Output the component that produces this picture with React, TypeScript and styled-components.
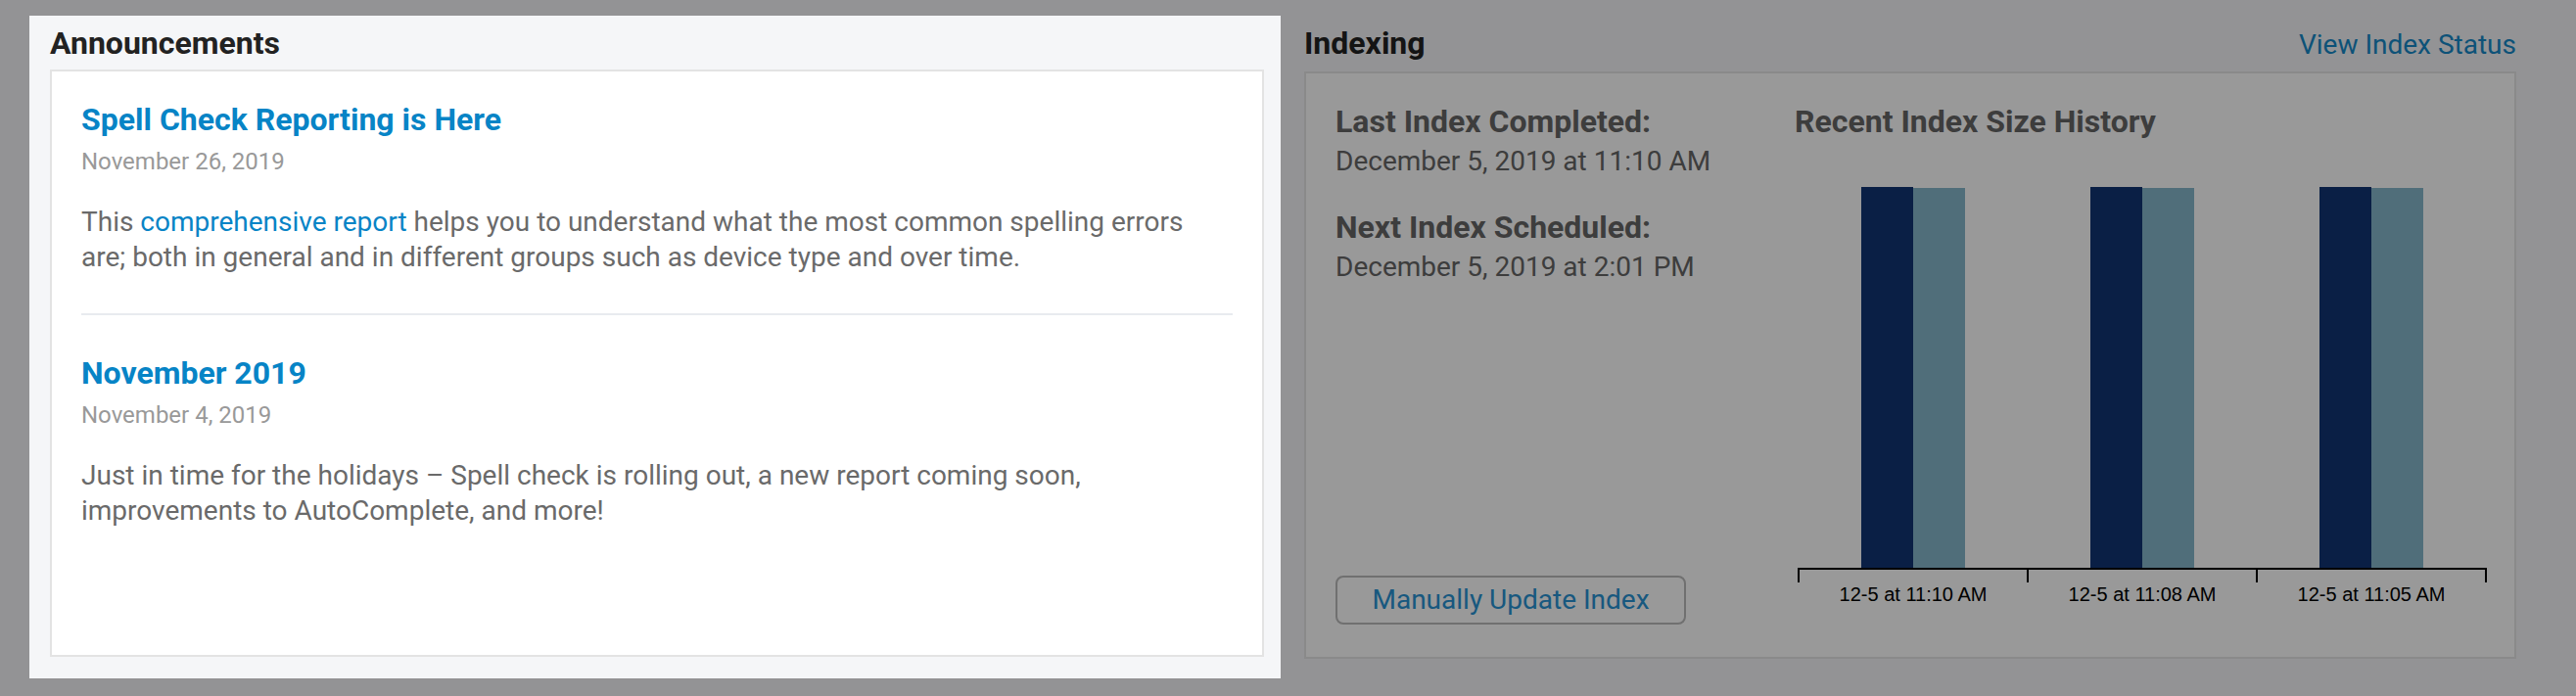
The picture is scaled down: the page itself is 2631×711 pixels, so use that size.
import React from "react";
import styled, { createGlobalStyle } from "styled-components";

const Global = createGlobalStyle`
  html, body {
    margin: 0;
    padding: 0;
    background: #f5f6f8;
    font-family: Roboto, "Liberation Sans", Arial, sans-serif;
    overflow: hidden;
  }
  #root { min-height: 100vh; }
`;

const Page = styled.div`
  display: grid;
  grid-template-columns: 1278px 1238px;
  column-gap: 24px;
  padding: 16px 0 0 30px;
  min-height: 100vh;
  box-sizing: border-box;
`;

const Spotlight = styled.section`
  position: relative;
  z-index: 1;
  background: #f5f6f8;
  padding: 9px 17px 22px 21px;
  box-shadow: 0 0 0 4000px rgba(0, 0, 0, 0.4);
  align-self: start;
`;

const Column = styled.section`
  padding-top: 9px;
  align-self: start;
`;

const Header = styled.div`
  display: flex;
  justify-content: space-between;
  align-items: baseline;
  margin-bottom: 8px;
`;

const SectionTitle = styled.h2`
  margin: 0;
  font-size: 32px;
  line-height: 38px;
  font-weight: 700;
  color: #222;
`;

const HeaderLink = styled.a`
  font-size: 28px;
  line-height: 38px;
  color: #1789c8;
  text-decoration: none;
`;

const Card = styled.div<{ $border: string }>`
  box-sizing: border-box;
  height: 600px;
  background: #fff;
  border: 2px solid ${(p) => p.$border};
  padding: 29px 30px 33px 30px;
`;

const ItemTitle = styled.a`
  display: block;
  font-size: 32px;
  line-height: 40px;
  font-weight: 700;
  color: #0784c6;
  text-decoration: none;
`;

const ItemDate = styled.div`
  margin-top: 8px;
  font-size: 24px;
  line-height: 30px;
  color: #999;
`;

const ItemBody = styled.p`
  margin: 29px 0 0;
  font-size: 28px;
  line-height: 36px;
  color: #6a6a6a;
`;

const InlineLink = styled.a`
  color: #0784c6;
  text-decoration: none;
`;

const Divider = styled.hr`
  border: 0;
  height: 2px;
  background: #e8ebef;
  margin: 39px 0 39px;
`;

const IndexGrid = styled.div`
  display: grid;
  grid-template-columns: 469px 1fr;
  height: 100%;
`;

const InfoColumn = styled.div`
  display: flex;
  flex-direction: column;
  align-items: flex-start;
`;

const Label = styled.div<{ $gap?: boolean }>`
  font-size: 32px;
  line-height: 40px;
  font-weight: 700;
  color: #666;
  margin-top: ${(p) => (p.$gap ? "29px" : "0")};
`;

const Value = styled.div`
  margin-top: 3px;
  font-size: 28px;
  line-height: 36px;
  color: #666;
`;

const Button = styled.button`
  margin-top: auto;
  width: 358px;
  height: 50px;
  box-sizing: border-box;
  border: 2px solid #bbb;
  border-radius: 8px;
  background: #fff;
  color: #2893d4;
  font-family: Roboto, "Liberation Sans", Arial, sans-serif;
  font-size: 28px;
  line-height: 1;
  padding: 0;
  cursor: pointer;
`;

const ChartColumn = styled.div`
  display: flex;
  flex-direction: column;
`;

const ChartSvg = styled.svg`
  display: block;
  margin-top: 18px;
  overflow: visible;
`;

const bars = [
  { x: 68, label: "12-5 at 11:10 AM" },
  { x: 302, label: "12-5 at 11:08 AM" },
  { x: 536, label: "12-5 at 11:05 AM" },
];

function SizeChart() {
  return (
    <ChartSvg width={705} height={470} viewBox="0 0 705 470">
      {bars.map((b) => (
        <g key={b.label}>
          <rect x={b.x} y={29} width={53} height={389} fill="#123473" />
          <rect x={b.x + 53} y={30} width={53} height={388} fill="#85b7cb" />
          <text
            x={b.x + 53}
            y={452}
            textAnchor="middle"
            fontFamily='"Liberation Sans", Arial, sans-serif'
            fontSize={20}
            fill="#000"
          >
            {b.label}
          </text>
        </g>
      ))}
      <path d="M4,433V419H706V433" fill="none" stroke="#000" strokeWidth={2} />
      <path d="M238,419V433M472,419V433" fill="none" stroke="#000" strokeWidth={2} />
    </ChartSvg>
  );
}

export default function App() {
  return (
    <>
      <Global />
      <Page>
        <Spotlight>
          <Header>
            <SectionTitle>Announcements</SectionTitle>
          </Header>
          <Card $border="#e3e3e3">
            <ItemTitle href="#">Spell Check Reporting is Here</ItemTitle>
            <ItemDate>November 26, 2019</ItemDate>
            <ItemBody>
              This <InlineLink href="#">comprehensive report</InlineLink> helps you to
              understand what the most common spelling errors are; both in general and in
              different groups such as device type and over time.
            </ItemBody>
            <Divider />
            <ItemTitle href="#">November 2019</ItemTitle>
            <ItemDate>November 4, 2019</ItemDate>
            <ItemBody>
              Just in time for the holidays – Spell check is rolling out, a new report coming
              soon, improvements to AutoComplete, and more!
            </ItemBody>
          </Card>
        </Spotlight>
        <Column>
          <Header>
            <SectionTitle>Indexing</SectionTitle>
            <HeaderLink href="#">View Index Status</HeaderLink>
          </Header>
          <Card $border="#e6e6e6">
            <IndexGrid>
              <InfoColumn>
                <Label>Last Index Completed:</Label>
                <Value>December 5, 2019 at 11:10 AM</Value>
                <Label $gap>Next Index Scheduled:</Label>
                <Value>December 5, 2019 at 2:01 PM</Value>
                <Button type="button">Manually Update Index</Button>
              </InfoColumn>
              <ChartColumn>
                <Label>Recent Index Size History</Label>
                <SizeChart />
              </ChartColumn>
            </IndexGrid>
          </Card>
        </Column>
      </Page>
    </>
  );
}
